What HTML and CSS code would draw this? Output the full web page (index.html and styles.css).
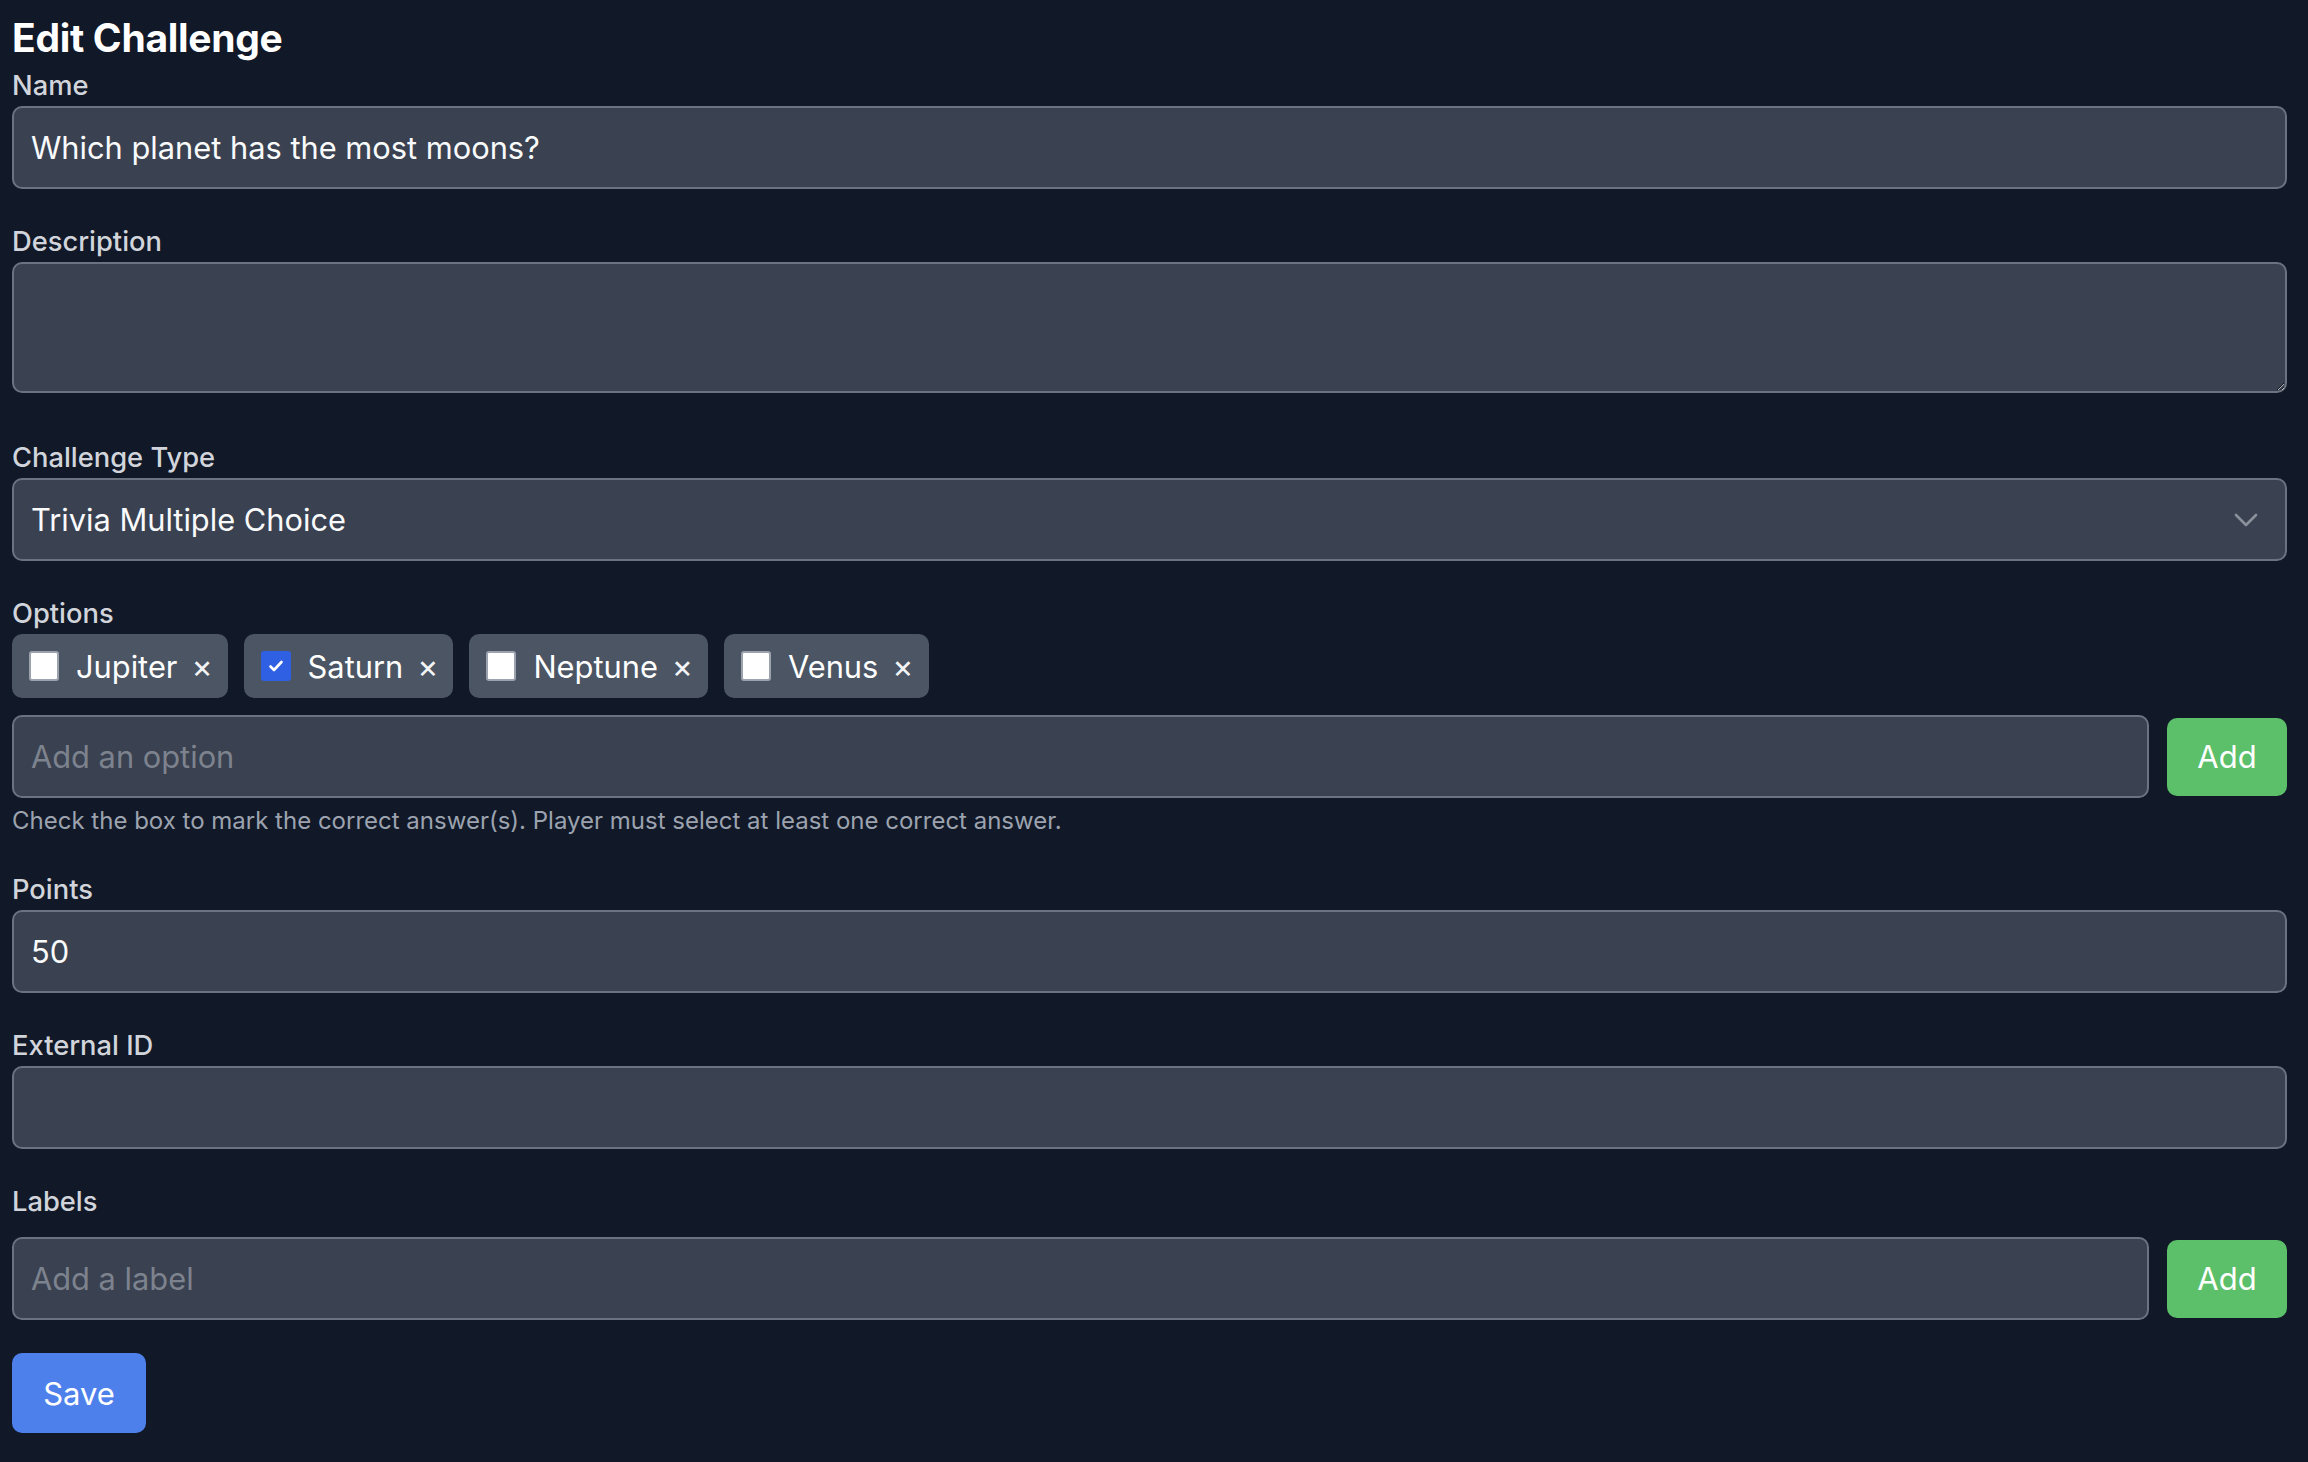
FILE: index.html
```html
<!DOCTYPE html>
<html lang="en">
<head>
  <meta charset="UTF-8">
  <title>Edit Challenge</title>
  <link rel="stylesheet" href="styles.css">
</head>
<body>

<h1>Edit Challenge</h1>

<form id="challengeForm">
  <div class="field">
    <label for="name">Name</label>
    <input type="text" id="name" value="Which planet has the most moons?">
  </div>

  <div class="field field-desc">
    <label for="description">Description</label>
    <textarea id="description"></textarea>
  </div>

  <div class="field">
    <label for="type">Challenge Type</label>
    <div class="select-wrap">
      <select id="type">
        <option>Trivia Multiple Choice</option>
        <option>Photo</option>
        <option>Text Answer</option>
      </select>
      <svg class="chevron" width="24" height="14" viewBox="0 0 24 14" fill="none">
        <path d="M2 2l10 10L22 2" stroke="#8b919c" stroke-width="2.6" stroke-linecap="round" stroke-linejoin="round"/>
      </svg>
    </div>
  </div>

  <div class="field">
    <label>Options</label>
    <div class="chips">
      <div class="chip"><span class="box"></span><span>Jupiter</span><span class="remove">×</span></div>
      <div class="chip"><span class="box checked">
        <svg width="20" height="20" viewBox="0 0 20 20" fill="none"><path d="M4.5 10.5l3.5 3.5L15.5 6" stroke="#fff" stroke-width="2.6" stroke-linecap="round" stroke-linejoin="round"/></svg>
      </span><span>Saturn</span><span class="remove">×</span></div>
      <div class="chip"><span class="box"></span><span>Neptune</span><span class="remove">×</span></div>
      <div class="chip"><span class="box"></span><span>Venus</span><span class="remove">×</span></div>
    </div>
    <div class="add-row">
      <input type="text" placeholder="Add an option">
      <button type="button" class="btn-add">Add</button>
    </div>
    <p class="hint">Check the box to mark the correct answer(s). Player must select at least one correct answer.</p>
  </div>

  <div class="field">
    <label for="points">Points</label>
    <input type="text" id="points" value="50">
  </div>

  <div class="field">
    <label for="externalId">External ID</label>
    <input type="text" id="externalId">
  </div>

  <div class="field">
    <label>Labels</label>
    <div class="add-row labels-row">
      <input type="text" placeholder="Add a label">
      <button type="button" class="btn-add">Add</button>
    </div>
  </div>

  <button type="submit" class="btn-save">Save</button>
</form>

</body>
</html>
```

FILE: styles.css
```css
body {
  margin: 0;
  padding: 10px 21px 40px 12px;
  background: #111827;
  color: #f3f4f6;
  font-family: Inter, "Noto Sans", sans-serif;
}
h1 {
  margin: 0;
  font-size: 39px;
  line-height: 56px;
  font-weight: 700;
  color: #fff;
  letter-spacing: -0.3px;
}
.field { margin-bottom: 33px; }
.field-desc { margin-bottom: 45px; }
.field label {
  display: block;
  font-size: 27.3px;
  line-height: 40px;
  font-weight: 500;
  color: #d1d5db;
}
input, textarea, select {
  display: block;
  width: 100%;
  box-sizing: border-box;
  height: 83px;
  padding: 0 17px;
  background: #3a4150;
  border: 2px solid #6b7280;
  border-radius: 10px;
  color: #f9fafb;
  font-family: inherit;
  font-size: 30.8px;
  outline: none;
}
input::placeholder { color: #7d838e; }
textarea { height: 131px; resize: vertical; padding: 12px 17px; }
select { appearance: none; -webkit-appearance: none; }
.select-wrap { position: relative; }
.chevron {
  position: absolute;
  right: 29px;
  top: 35px;
}
.chips {
  display: flex;
  gap: 16px;
  margin-bottom: 17px;
}
.chip {
  display: flex;
  align-items: center;
  gap: 17px;
  height: 64px;
  padding: 0 15px 0 17px;
  background: #4b5563;
  border-radius: 10px;
  font-size: 30.8px;
  color: #fff;
}
.box {
  display: flex;
  align-items: center;
  justify-content: center;
  width: 30px;
  height: 30px;
  box-sizing: border-box;
  background: #fff;
  border: 2px solid #9ca3af;
  border-radius: 3px;
}
.box.checked { background: #2f60e3; border-color: #2f60e3; }
.remove { font-size: 32px; color: #f3f4f6; margin-left: -3px; }
.add-row {
  display: flex;
  align-items: center;
  gap: 18px;
}
.add-row input { flex: 1; }
.labels-row { margin-top: 15px; }
.btn-add {
  width: 120px;
  height: 78px;
  border: none;
  border-radius: 10px;
  background: #5cbf6a;
  color: #fff;
  font-family: inherit;
  font-size: 31px;
  cursor: pointer;
}
.hint {
  margin: 7px 0 0;
  font-size: 24px;
  line-height: 32px;
  color: #9ca3af;
}
.btn-save {
  width: 134px;
  height: 80px;
  border: none;
  border-radius: 10px;
  background: #4e80ec;
  color: #fff;
  font-family: inherit;
  font-size: 31px;
  cursor: pointer;
}
```
